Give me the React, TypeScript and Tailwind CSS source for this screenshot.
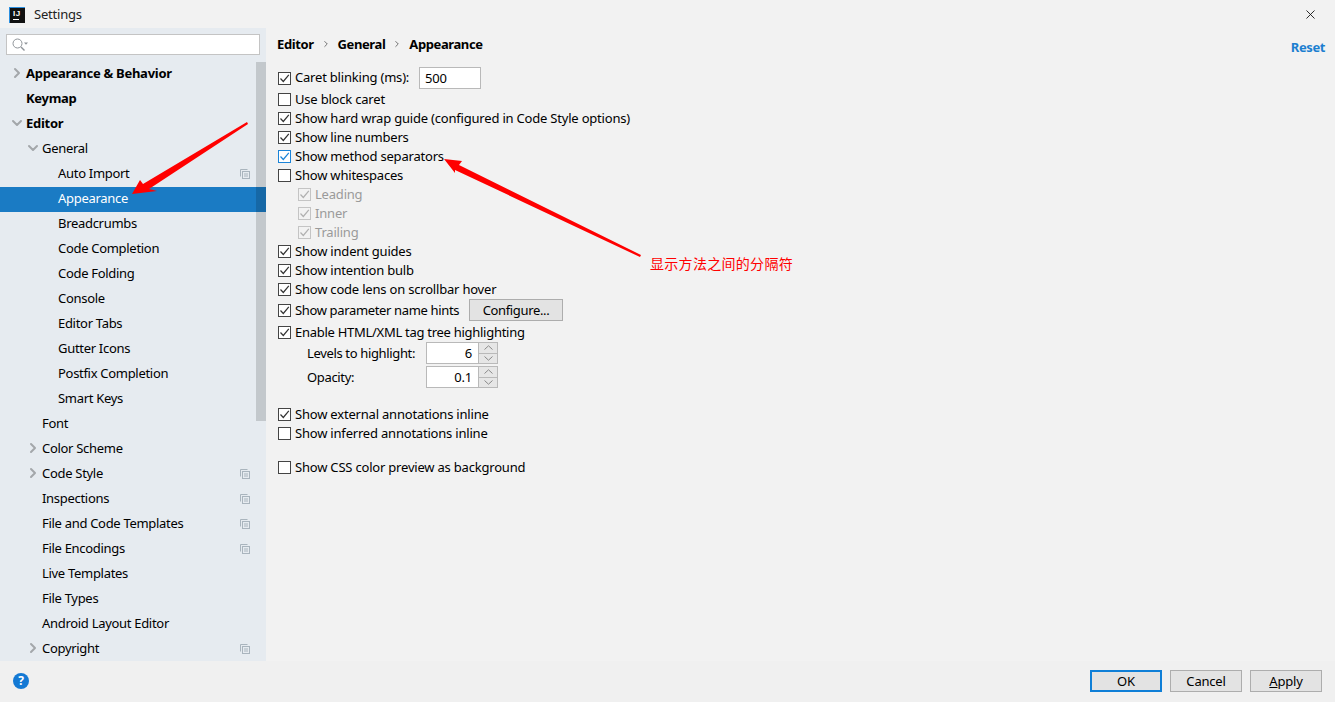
import React from 'react';
import { ChevronRight, ChevronDown, X } from 'lucide-react';

type TreeItem = { label: string; depth: number; bold?: boolean; arrow?: 'right' | 'down'; copy?: boolean; selected?: boolean };

const tree: TreeItem[] = [
  { label: 'Appearance & Behavior', depth: 0, bold: true, arrow: 'right' },
  { label: 'Keymap', depth: 0, bold: true },
  { label: 'Editor', depth: 0, bold: true, arrow: 'down' },
  { label: 'General', depth: 1, arrow: 'down' },
  { label: 'Auto Import', depth: 2, copy: true },
  { label: 'Appearance', depth: 2, selected: true },
  { label: 'Breadcrumbs', depth: 2 },
  { label: 'Code Completion', depth: 2 },
  { label: 'Code Folding', depth: 2 },
  { label: 'Console', depth: 2 },
  { label: 'Editor Tabs', depth: 2 },
  { label: 'Gutter Icons', depth: 2 },
  { label: 'Postfix Completion', depth: 2 },
  { label: 'Smart Keys', depth: 2 },
  { label: 'Font', depth: 1 },
  { label: 'Color Scheme', depth: 1, arrow: 'right' },
  { label: 'Code Style', depth: 1, arrow: 'right', copy: true },
  { label: 'Inspections', depth: 1, copy: true },
  { label: 'File and Code Templates', depth: 1, copy: true },
  { label: 'File Encodings', depth: 1, copy: true },
  { label: 'Live Templates', depth: 1 },
  { label: 'File Types', depth: 1 },
  { label: 'Android Layout Editor', depth: 1 },
  { label: 'Copyright', depth: 1, arrow: 'right', copy: true },
];

const CopyIcon = () => (
  <svg width="10" height="10" viewBox="0 0 10 10" fill="none" stroke="#a9b4bd" strokeWidth="1" className="mb-[2px] shrink-0">
    <path d="M0.5 7.5V0.5H7.5" />
    <rect x="2.5" y="2.5" width="7" height="7" />
    <path d="M4 5H8M4 7H8" />
  </svg>
);

const TreeRow = ({ item }: { item: TreeItem }) => {
  const pad = item.depth === 0 ? 'pl-[26px]' : item.depth === 1 ? 'pl-[42px]' : 'pl-[58px]';
  const arrowPos = item.depth === 0 ? 'left-[9px]' : 'left-[25px]';
  return (
    <div className={`relative flex h-[25px] shrink-0 items-center pr-[16px] ${pad} ${item.selected ? 'bg-[#1a7bc4] text-white' : 'text-black'}`}>
      {item.arrow === 'right' && <ChevronRight size={16} strokeWidth={3} className={`absolute top-[3px] ${arrowPos} text-[#a3a7aa]`} />}
      {item.arrow === 'down' && <ChevronDown size={16} strokeWidth={3} className={`absolute top-[3px] ${arrowPos} text-[#a3a7aa]`} />}
      <span className={`flex-1 pb-[3px] ${item.bold ? 'font-bold tracking-[-0.28px]' : 'tracking-[-0.3px]'}`}>{item.label}</span>
      {item.copy && <CopyIcon />}
    </div>
  );
};

const Check = ({ checked, disabled, active }: { checked?: boolean; disabled?: boolean; active?: boolean }) => {
  const border = active ? 'border-[#1b84d8]' : disabled ? 'border-[#c4c4c4]' : 'border-[#444]';
  const stroke = active ? '#1b84d8' : disabled ? '#b0b0b0' : '#333';
  return (
    <span className={`flex h-[13px] w-[13px] shrink-0 items-center justify-center border ${border} ${disabled ? 'bg-[#f2f2f2]' : 'bg-white'}`}>
      {checked && (
        <svg width="11" height="11" viewBox="0 0 11 11" fill="none" stroke={stroke} strokeWidth="1.2">
          <path d="M1.5 5.5L4.3 8.5L9.8 1.8" />
        </svg>
      )}
    </span>
  );
};

const Option = ({ label, checked, active, disabled, className = '' }: { label: string; checked?: boolean; active?: boolean; disabled?: boolean; className?: string }) => (
  <div className={`flex h-[19px] items-center gap-[4px] ${className}`}>
    <Check checked={checked} active={active} disabled={disabled} />
    <span className={`pb-[2px] ${disabled ? 'text-[#9a9a9a]' : ''}`}>{label}</span>
  </div>
);

const Spinner = ({ label, value }: { label: string; value: string }) => (
  <div className="flex h-[22px] items-center pl-[29px]">
    <span className="w-[119px] tracking-[-0.35px]">{label}</span>
    <div className="flex h-[22px] w-[72px] border border-[#b9b9b9]">
      <div className="flex w-[51px] items-center justify-end bg-white pr-[6px]">{value}</div>
      <div className="flex flex-1 flex-col border-l border-[#b9b9b9] bg-[#e6e6e6]">
        <div className="flex flex-1 items-center justify-center border-b border-[#b9b9b9]">
          <svg width="9" height="5" viewBox="0 0 9 5" fill="none" stroke="#8a8a8a">
            <path d="M0.5 4.5L4.5 0.8L8.5 4.5" />
          </svg>
        </div>
        <div className="flex flex-1 items-center justify-center">
          <svg width="9" height="5" viewBox="0 0 9 5" fill="none" stroke="#8a8a8a">
            <path d="M0.5 0.5L4.5 4.2L8.5 0.5" />
          </svg>
        </div>
      </div>
    </div>
  </div>
);

const FooterButton = ({ children, primary }: { children: React.ReactNode; primary?: boolean }) => (
  <button className={`h-[22px] w-[72px] bg-[#e3e3e3] ${primary ? 'border-2 border-[#0f7fd7]' : 'border border-[#adadad]'}`}>{children}</button>
);

export default function App() {
  return (
    <div className="relative flex h-[702px] w-[1335px] flex-col overflow-hidden bg-[#f2f2f2] font-['Noto_Sans','Open_Sans',sans-serif] text-[13px] leading-[18px] tracking-[-0.2px] text-black">
      {/* title bar */}
      <div className="flex h-[28px] shrink-0 items-center pl-[9px] pr-[17px]">
        <div className="mb-[-1px] flex h-[16px] w-[16px] flex-col border-t border-l border-[#2b8fe0] bg-[#111] pl-[3px] pt-[2px]">
          <span className="font-['Liberation_Sans',sans-serif] text-[8px] font-bold leading-[8px] tracking-[0.5px] text-white">IJ</span>
          <span className="mt-[1px] h-[1px] w-[6px] bg-white" />
        </div>
        <span className="ml-[9px] flex-1 text-[#222]">Settings</span>
        <X size={15} strokeWidth={1.4} className="text-[#111]" />
      </div>

      <div className="flex min-h-0 flex-1">
        {/* sidebar */}
        <aside className="relative flex w-[266px] shrink-0 flex-col overflow-hidden bg-[#e6ebf0]">
          <div className="mx-[6px] mt-[6px] flex h-[21px] w-[254px] shrink-0 items-center border border-[#c4c4c4] bg-white pl-[5px]">
            <svg width="16" height="14" viewBox="0 0 16 14" fill="none" stroke="#8f9499" strokeWidth="1">
              <circle cx="5.5" cy="5.5" r="4.5" />
              <path d="M9 9L12.5 12.5" strokeWidth="1.4" />
              <path d="M12 4.5H16L14 6.8Z" fill="#8f9499" stroke="none" />
            </svg>
          </div>
          <div className="mt-[7px] flex flex-col">
            {tree.map((item) => (
              <TreeRow key={item.label} item={item} />
            ))}
          </div>
          <div className="absolute right-0 top-[34px] h-[359px] w-[10px] bg-black/15" />
        </aside>

        {/* settings panel */}
        <main className="flex min-w-0 flex-1 flex-col pl-[11px]">
          <div className="flex h-[31px] items-center font-bold tracking-[-0.4px]">
            <span>Editor</span>
            <ChevronRight size={10} strokeWidth={1.6} className="mx-[7px] text-[#333]" />
            <span>General</span>
            <ChevronRight size={10} strokeWidth={1.6} className="mx-[7px] text-[#333]" />
            <span>Appearance</span>
            <span className="ml-auto mr-[10px] mt-[7px] text-[#1c7fd0]">Reset</span>
          </div>
          <div className="flex flex-col pl-[1px]">
            <div className="mt-[8px] flex h-[22px] items-center gap-[4px]">
              <Check checked />
              <span className="w-[120px] pb-[2px]">Caret blinking (ms):</span>
              <div className="flex h-[22px] w-[62px] items-center border border-[#b9b9b9] bg-white pl-[5px]">500</div>
            </div>
            <Option label="Use block caret" className="mt-[1px]" />
            <Option label="Show hard wrap guide (configured in Code Style options)" checked />
            <Option label="Show line numbers" checked />
            <Option label="Show method separators" checked active />
            <Option label="Show whitespaces" />
            <Option label="Leading" checked disabled className="pl-[20px]" />
            <Option label="Inner" checked disabled className="pl-[20px]" />
            <Option label="Trailing" checked disabled className="pl-[20px]" />
            <Option label="Show indent guides" checked />
            <Option label="Show intention bulb" checked />
            <Option label="Show code lens on scrollbar hover" checked />
            <div className="flex h-[22px] items-center gap-[4px]">
              <Check checked />
              <span className="w-[170px] tracking-[-0.35px]">Show parameter name hints</span>
              <button className="h-[22px] w-[94px] border border-[#adadad] bg-[#e3e3e3] tracking-[-0.35px]">Configure...</button>
            </div>
            <Option label="Enable HTML/XML tag tree highlighting" checked className="mt-[2px] tracking-[-0.28px]" />
            <div className="flex flex-col gap-[2px]">
              <Spinner label="Levels to highlight:" value="6" />
              <Spinner label="Opacity:" value="0.1" />
            </div>
            <Option label="Show external annotations inline" checked className="mt-[17px]" />
            <Option label="Show inferred annotations inline" />
            <Option label="Show CSS color preview as background" className="mt-[15px]" />
          </div>
        </main>
      </div>

      {/* footer */}
      <div className="flex h-[41px] shrink-0 items-center gap-[8px] bg-[#f0f0f0] pb-[1px] pl-[13px] pr-[13px]">
        <span className="mr-auto flex h-[16px] w-[16px] items-center justify-center rounded-full bg-[#1479d4] text-[12px] font-bold leading-none text-white">?</span>
        <FooterButton primary>OK</FooterButton>
        <FooterButton>Cancel</FooterButton>
        <FooterButton>
          <span className="underline">A</span>pply
        </FooterButton>
      </div>

      {/* red annotations */}
      <svg className="absolute left-0 top-0" width="1335" height="702" viewBox="0 0 1335 702" fill="#ff0000">
        <polygon points="132,194 140,180 143,184 247,122 248,124 149,189 157,191" />
        <polygon points="444,159 462,161 459,165 641,255 640,257 455,170 455,173" />
      </svg>
      <span className="absolute left-[650px] top-[254px] font-['Noto_Sans_CJK_SC',sans-serif] text-[14px] tracking-[0.3px] text-[#ff0000]">显示方法之间的分隔符</span>
    </div>
  );
}
